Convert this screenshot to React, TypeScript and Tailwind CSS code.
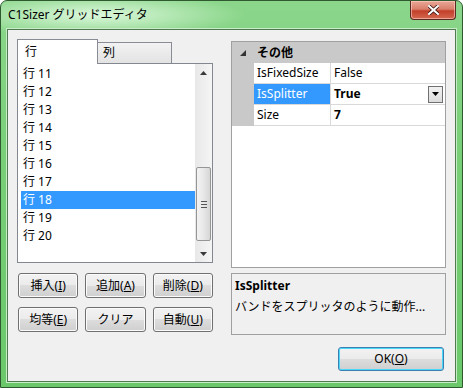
import React from "react";

const rows = ["行 11", "行 12", "行 13", "行 14", "行 15", "行 16", "行 17", "行 18", "行 19", "行 20"];

const Btn = ({ children, className = "" }: { children: React.ReactNode; className?: string }) => (
  <div
    className={`flex h-[25px] items-center justify-center rounded-[3px] border border-[#707070] bg-[linear-gradient(#f2f2f2_0%,#ebebeb_50%,#dddddd_50%,#cfcfcf_100%)] text-[12px] text-black shadow-[inset_0_0_0_1px_#fbfbfb] ${className}`}
  >
    {children}
  </div>
);

const Arrow = ({ up }: { up?: boolean }) => (
  <svg width="7" height="4" viewBox="0 0 7 4">
    <path d={up ? "M0 4 L3.5 0 L7 4 Z" : "M0 0 L3.5 4 L7 0 Z"} fill="#3a3a3a" />
  </svg>
);

export default function App() {
  return (
    <div className="flex h-[388px] w-[463px] flex-col rounded-t-[7px] border border-[#2f5a2f] bg-[radial-gradient(ellipse_150px_22px_at_95px_14px,rgba(225,250,225,0.95),rgba(225,250,225,0)),linear-gradient(#8bd68b,#78cf78_40%,#6ac86a)] font-['Noto_Sans','Noto_Sans_CJK_JP',sans-serif]">
      {/* title bar */}
      <div className="flex h-[28px] items-start">
        <span className="ml-[7px] mt-[6px] text-[12px] leading-[16px] text-black">C1Sizer グリッドエディタ</span>
        <div className="ml-auto mr-[6px] flex h-[19px] w-[46px] items-center justify-center rounded-b-[4px] border border-t-0 border-[#5a2a22] bg-[linear-gradient(#e9a797_0%,#d9806c_45%,#c2402a_55%,#d4674f_100%)] shadow-[inset_0_0_0_1px_rgba(255,210,200,0.6)]">
          <svg width="11" height="10" viewBox="0 0 11 10">
            <path d="M1 1 L10 9 M10 1 L1 9" stroke="#3a1510" strokeWidth="3.6" strokeLinecap="square" />
            <path d="M1 1 L10 9 M10 1 L1 9" stroke="#ffffff" strokeWidth="2" strokeLinecap="square" />
          </svg>
        </div>
      </div>

      {/* client area */}
      <div className="mx-[6px] mb-[5px] flex flex-1 gap-[18px] border border-[#4f7a4f] bg-[#f0f0f0] px-[9px] pt-[9px] text-[12px] text-black shadow-[0_0_0_1px_#c8ecc8]">
        {/* left column */}
        <div className="flex w-[196px] flex-col">
          <div className="flex h-[24px] items-end">
            <div className="relative z-10 -mb-px flex h-[25px] w-[81px] items-center border border-b-0 border-[#898c95] bg-white pl-[7px]">
              行
            </div>
            <div className="flex h-[21px] w-[74px] items-center border border-l-0 border-b-0 border-[#898c95] bg-[linear-gradient(#f2f2f2,#e3e3e3)] pl-[5px]">
              列
            </div>
          </div>
          <div className="flex h-[200px] border border-[#828790] bg-white">
            <div className="flex flex-1 flex-col pl-[3px] pt-[1px]">
              {rows.map((r) => (
                <div
                  key={r}
                  className={`flex h-[18px] items-center pl-[2px] ${r === "行 18" ? "bg-[#3399ff] text-white" : ""}`}
                >
                  {r}
                </div>
              ))}
            </div>
            <div className="flex w-[17px] flex-col items-center bg-[linear-gradient(90deg,#e8e8e8,#f5f5f5)]">
              <div className="flex h-[17px] items-center justify-center">
                <Arrow up />
              </div>
              <div className="flex-1 self-stretch px-[1px] pt-[86px] pb-[3px]">
                <div className="flex h-[74px] flex-col items-center justify-center gap-[2px] rounded-[2px] border border-[#959595] bg-[linear-gradient(90deg,#f3f3f3,#e8e8e8_50%,#d6d6d6)]">
                  <div className="h-px w-[6px] bg-[#555]" />
                  <div className="h-px w-[6px] bg-[#555]" />
                  <div className="h-px w-[6px] bg-[#555]" />
                </div>
              </div>
              <div className="flex h-[17px] items-center justify-center">
                <Arrow />
              </div>
            </div>
          </div>
          <div className="ml-px mt-[10px] flex gap-[7px]">
            <Btn className="w-[62px]">挿入(<u>I</u>)</Btn>
            <Btn className="w-[62px]">追加(<u>A</u>)</Btn>
            <Btn className="w-[62px]">削除(<u>D</u>)</Btn>
          </div>
          <div className="ml-px mt-[9px] flex gap-[7px]">
            <Btn className="w-[62px]">均等(<u>E</u>)</Btn>
            <Btn className="w-[62px]">クリア</Btn>
            <Btn className="w-[62px]">自動(<u>U</u>)</Btn>
          </div>
        </div>

        {/* right column */}
        <div className="flex w-[215px] flex-col">
          <div className="mt-[2px] flex h-[227px] flex-col border border-[#a0a0a0] bg-white">
            <div className="flex h-[21px] items-center bg-[#c9c9c9] font-bold">
              <div className="flex w-[22px] justify-center">
                <svg width="6" height="6" viewBox="0 0 6 6">
                  <path d="M6 0 L6 6 L0 6 Z" fill="#333" />
                </svg>
              </div>
              <span className="pl-[3px]">その他</span>
            </div>
            {[
              ["IsFixedSize", "False", false, false],
              ["IsSplitter", "True", true, true],
              ["Size", "7", true, false],
            ].map(([name, val, bold, sel]) => (
              <div key={name as string} className="flex h-[21px] bg-[#c9c9c9]">
                <div className="w-[22px]" />
                <div
                  className={`flex w-[77px] items-center border-b border-r border-[#d9d9d9] pl-[3px] ${sel ? "bg-[#3399ff] text-white" : "bg-white"}`}
                >
                  {name}
                </div>
                <div className={`flex flex-1 items-center border-b border-[#d9d9d9] bg-white pl-[3px] ${bold ? "font-bold" : ""}`}>
                  <span className="flex-1">{val}</span>
                  {sel && (
                    <div className="mr-[2px] flex h-[17px] w-[15px] items-center justify-center border border-[#707070] bg-[linear-gradient(#f2f2f2,#dcdcdc)]">
                      <svg width="7" height="4" viewBox="0 0 7 4">
                        <path d="M0 0 L3.5 4 L7 0 Z" fill="#000" />
                      </svg>
                    </div>
                  )}
                </div>
              </div>
            ))}
          </div>
          <div className="mt-[5px] flex h-[62px] flex-col border border-[#a0a0a0] pl-[3px] pt-[3px]">
            <span className="h-[18px] font-bold">IsSplitter</span>
            <span className="mt-[3px]">バンドをスプリッタのように動作...</span>
          </div>
          <div className="mr-[2px] mt-[12px] flex justify-end">
            <div className="flex h-[24px] w-[106px] items-center justify-center rounded-[3px] border border-[#3c7fb1] bg-[linear-gradient(#f2f2f2_0%,#ebebeb_50%,#dddddd_50%,#cfcfcf_100%)] shadow-[inset_0_0_0_1px_#48d8fb]">
              <span>
                OK(<u>O</u>)
              </span>
            </div>
          </div>
        </div>
      </div>
    </div>
  );
}
